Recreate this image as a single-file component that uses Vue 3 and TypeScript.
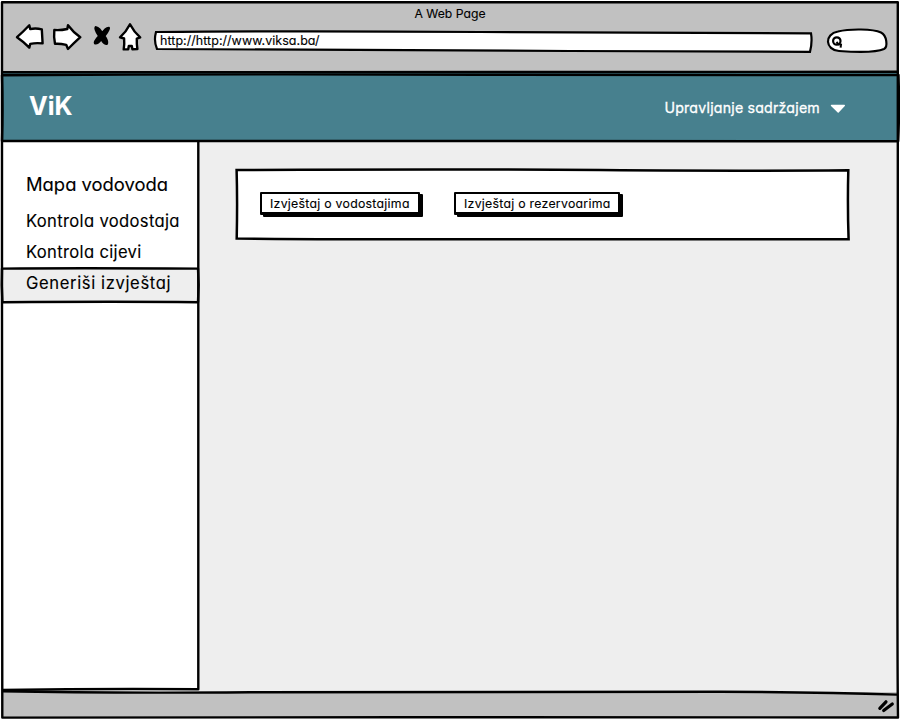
<script setup lang="ts">
interface MenuItem {
  label: string
  kind: string
  active?: boolean
}

const menu: MenuItem[] = [
  { label: 'Mapa vodovoda', kind: 'map' },
  { label: 'Kontrola vodostaja', kind: 'level' },
  { label: 'Kontrola cijevi', kind: 'pipes' },
  { label: 'Generiši izvještaj', kind: 'report', active: true },
]

const reports: { label: string; kind: string }[] = [
  { label: 'Izvještaj o vodostajima', kind: 'levels' },
  { label: 'Izvještaj o rezervoarima', kind: 'tanks' },
]
</script>

<template>
  <div class="window">
    <header class="chrome">
      <div class="title"><span class="title-text">A Web Page</span></div>
      <div class="toolbar">
        <svg class="nav-icons" width="154" height="40" viewBox="0 20 154 40">
          <g fill="#fff" stroke="#000" stroke-width="2.4" stroke-linejoin="round">
            <path d="M17 37.2 Q23 32 29.3 25.3 L30.2 29 Q36 28 41.8 29.3 L42.6 43.4 Q36 42.6 30.3 43.8 L29.3 47.6 Q24 42 17 37.2 Z" />
            <path d="M54.3 30 Q60 30.6 67.3 29 L68 25.2 Q73 32 80.3 37.2 Q74 43 68 49 L66.2 44.8 Q60 43.4 55 43.8 Q53.6 37 54.3 30 Z" />
            <path d="M130 24.2 Q134 32 140.2 37.4 L136.8 38.6 Q136.6 44 137.4 49 L132.4 49.2 L131.8 46 L128.8 46 L128.2 49.4 L123.7 49.4 Q124.6 44 124.1 38.5 L120 37.4 Q126 32 130 24.2 Z" />
          </g>
          <g fill="#000" stroke="#000" stroke-width="1.8" stroke-linejoin="round">
            <path d="M95.5 27 Q100.5 28 102 33.8 Q105 27.4 109 27.6 Q110.2 29 104.7 36 Q108.2 41 107.2 43.8 Q104 45 101.3 39.4 Q97.5 44.4 94.8 43.4 Q93.6 41.5 98.8 36 Q94 28.8 95.5 27 Z" />
          </g>
        </svg>
        <div class="address">
          <svg class="outline" width="660" height="24" viewBox="153 29 660 24">
            <path d="M156 32 Q300 30.7 480 32 T811 33.4 Q812.5 42 810 51.8 Q650 51.5 570 51 T157 49 Q153.5 41 156 32 Z" fill="#fff" stroke="#000" stroke-width="2.2" />
          </svg>
          <span class="url">http://http://www.viksa.ba/</span>
        </div>
        <svg class="search" width="64" height="30" viewBox="825 26 64 30">
          <path d="M838 31.5 C850 28.6 873 28.8 881 32.5 C887 35.5 888 47 884 49 C874 53.5 853 52 839 51 C825 50 824 34 838 31.5 Z" fill="#fff" stroke="#000" stroke-width="2.2" />
          <circle cx="836.8" cy="41" r="3.7" fill="none" stroke="#000" stroke-width="2.2" />
          <path d="M836.5 42 L838.5 44.3 L841 44.6 L840.6 47.6" fill="none" stroke="#000" stroke-width="2" />
        </svg>
      </div>
    </header>

    <section class="banner">
      <h1 class="brand">ViK</h1>
      <div class="account">
        <span class="account-label">Upravljanje sadržajem</span>
        <svg class="caret" width="16" height="10" viewBox="0 0 16 10">
          <path d="M1.5 1.5 H14.3 L8.2 8 Z" fill="#fff" stroke="#fff" stroke-width="1.4" stroke-linejoin="round" />
        </svg>
      </div>
    </section>

    <div class="body">
      <nav class="sidebar">
        <a v-for="item in menu" :key="item.kind" class="item" :class="[item.kind, { active: item.active }]">
          <span class="item-label">{{ item.label }}</span>
        </a>
      </nav>
      <main class="content">
        <div class="panel">
          <svg class="outline" width="616" height="74" viewBox="234 168 616 74">
            <path d="M236.6 170 Q450 168.9 600 170 T848.3 170.3 Q847.4 205 848.6 239.3 Q650 239 500 239.3 T236.7 238.5 Q237.5 200 236.6 170 Z" fill="#fff" stroke="#000" stroke-width="2.5" />
          </svg>
          <button v-for="report in reports" :key="report.kind" class="report-button" :class="report.kind">
            <span>{{ report.label }}</span>
          </button>
        </div>
      </main>
    </div>

    <footer class="status">
      <svg class="grip" width="20" height="16" viewBox="877 699 20 16">
        <path d="M879.8 709.4 L886 702.8 M883.7 711.6 L892.3 705" fill="none" stroke="#000" stroke-width="3.2" stroke-linecap="round" />
      </svg>
    </footer>

    <svg class="frame" width="900" height="720" viewBox="0 0 900 720">
      <g fill="none" stroke="#000" stroke-width="2.4" stroke-linejoin="round">
        <path d="M2 2.3 Q400 2 600 2.2 T897.8 2.3 Q898.6 200 897.8 420 T898 717.5 Q600 716.6 400 717.2 T2.3 717.6 Q1.4 500 2 300 T2 2.3 Z" />
        <path d="M2 72.2 Q250 72.8 500 72 T898 71.8" />
        <path d="M2 75.3 Q240 73.8 480 74.8 T898.5 75 Q899.6 110 898.2 141.3 Q600 141.8 400 141 T2 141 Q3 110 2 75.3 Z" />
        <path d="M198.3 141 Q197.6 400 198.3 689.3 Q100 688.6 2 690" />
        <path d="M2 691.3 Q100 693.2 250 692.3 T720 691.7 Q820 692 897 694.6" />
        <path d="M2 268.6 Q70 267.8 198 268.6 Q199.3 285 198 302.2 Q120 301.4 2.4 302.2 Q1.3 285 2 268.6 Z" />
      </g>
    </svg>
  </div>
</template>

<style>
body {
  background: #fff;
}
</style>

<style scoped>
.window {
  position: relative;
  display: grid;
  grid-template-rows: 73px 68px 551px 28px;
  width: 900px;
  height: 720px;
  overflow: hidden;
  font-family: Inter, "Open Sans", sans-serif;
  font-feature-settings: "cv11", "calt" 0;
  -webkit-text-stroke: 0.12px currentColor;
  color: #000;
}

.frame {
  position: absolute;
  inset: 0;
  pointer-events: none;
}

.outline {
  position: absolute;
  left: 0;
  top: 0;
}

.chrome {
  display: flex;
  flex-direction: column;
  background: #c1c1c1;
  margin: 2px 2px 0;
}

.title {
  height: 18px;
  padding-top: 4px;
  box-sizing: border-box;
  text-align: center;
  font-size: 12.2px;
  line-height: 16px;
}

.toolbar {
  display: flex;
  align-items: flex-start;
  margin-left: -2px;
}

.address {
  position: relative;
  width: 660px;
  height: 24px;
  margin: 9px 12px 0 -1px;
}

.url {
  position: relative;
  display: block;
  padding-left: 7px;
  font-size: 12.5px;
  line-height: 23px;
  letter-spacing: 0.04px;
}

.search {
  margin-top: 6px;
}

.banner {
  display: flex;
  align-items: center;
  justify-content: space-between;
  margin: 0 2px;
  padding: 0 52px 0 27px;
  background: #47808e;
  color: #fff;
}

.brand {
  margin: 0 0 2px;
  font-size: 25px;
  line-height: 30px;
  font-weight: 700;
  letter-spacing: 0;
}

.account {
  display: flex;
  align-items: center;
  gap: 10px;
  padding-top: 2px;
  font-size: 14.2px;
  line-height: 20px;
  letter-spacing: 0.2px;
  -webkit-text-stroke-width: 0.3px;
}

.caret {
  margin-top: 2px;
}

.body {
  display: grid;
  grid-template-columns: 197px 1fr;
  margin: 0 2px;
}

.sidebar {
  display: flex;
  flex-direction: column;
  margin-bottom: 2px;
  padding-top: 28px;
  background: #fff;
}

.item {
  display: block;
  height: 31px;
  padding-left: 24px;
  font-size: 16.6px;
  line-height: 31px;
  letter-spacing: 0.33px;
  white-space: nowrap;
}

.item.map {
  height: 37px;
  font-size: 18.4px;
  line-height: 30px;
  letter-spacing: 0;
}

.item.active {
  height: 34px;
  background: #eee;
  letter-spacing: 0.62px;
}

.content {
  padding: 27px 0 0 35px;
  background: #eee;
}

.panel {
  position: relative;
  display: flex;
  gap: 34px;
  width: 616px;
  height: 74px;
  padding: 24px 0 0 26px;
  box-sizing: border-box;
}

.report-button {
  position: relative;
  height: 23px;
  padding: 1px 0 0 8px;
  box-sizing: border-box;
  border: 2px solid #000;
  border-bottom-width: 3px;
  border-radius: 1px;
  background: #fff;
  box-shadow: 3px 2px 0 #000;
  color: #000;
  font: inherit;
  font-feature-settings: inherit;
  font-size: 12.3px;
  line-height: 17px;
  letter-spacing: 0.27px;
  text-align: left;
  white-space: nowrap;
}

.report-button.levels {
  width: 160px;
}

.report-button.tanks {
  width: 166px;
}

.status {
  display: flex;
  justify-content: flex-end;
  align-items: center;
  margin: 0 2px 2px;
  background: #c1c1c1;
}

.grip {
  margin: 2px 1px 0 0;
}
</style>
